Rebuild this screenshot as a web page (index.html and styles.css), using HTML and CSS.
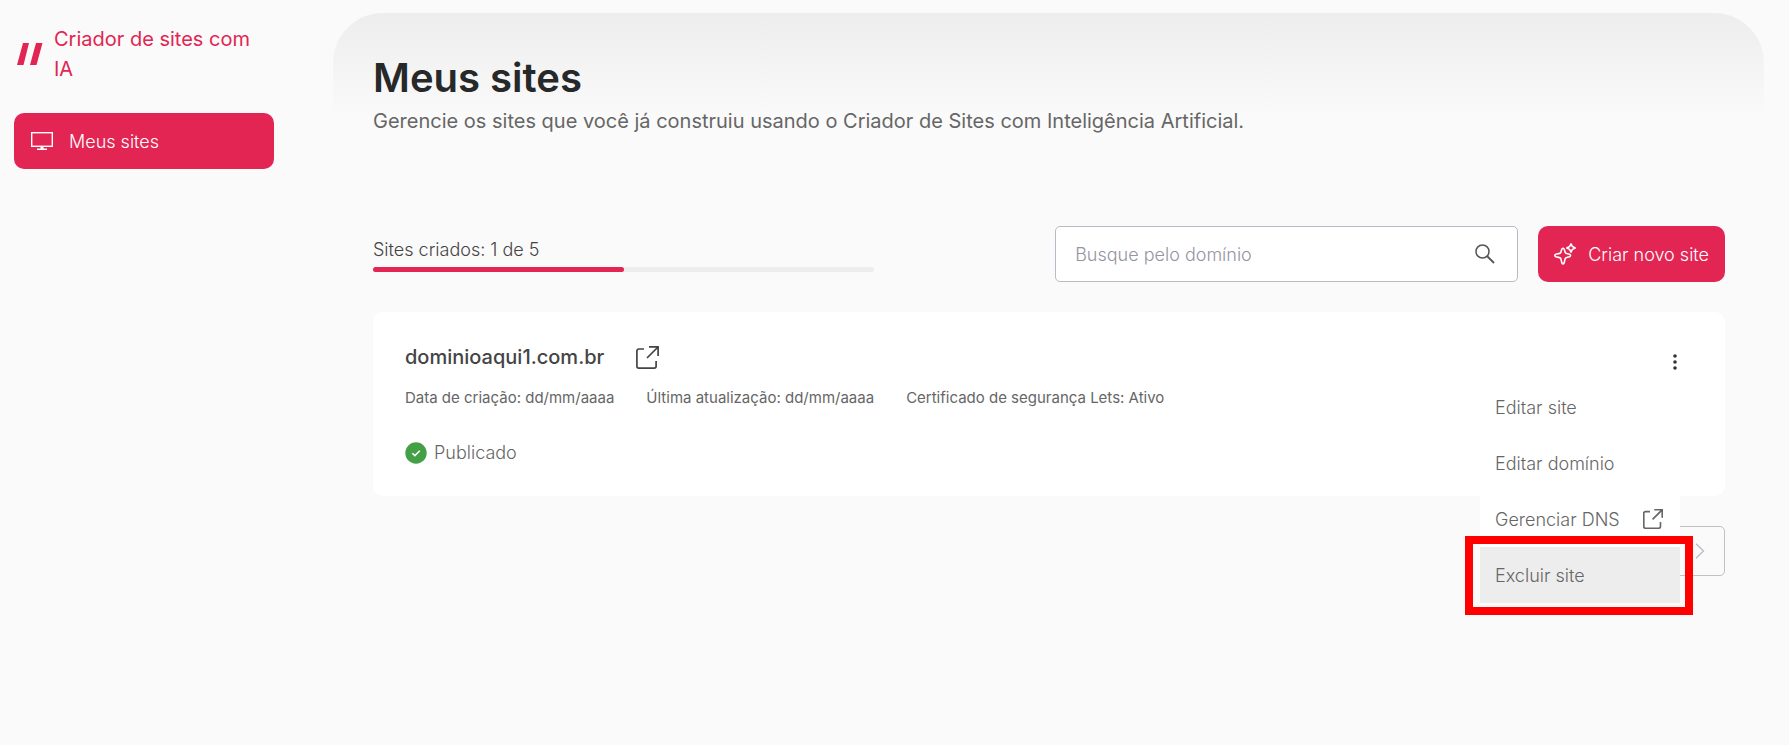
FILE: index.html
```html
<!DOCTYPE html>
<html lang="pt-BR">
<head>
    <meta charset="UTF-8">
    <meta name="viewport" content="width=device-width, initial-scale=1.0">
    <title>Meus sites</title>
    <link rel="stylesheet" href="styles.css">
</head>
<body>
    <aside class="sidebar">
        <a href="#" class="brand">
            <svg class="brand-logo" width="26" height="22" viewBox="0 0 26 22">
                <path d="M6 0h6L6.500 22H0zM19 0h6.500L19.500 22H13z" fill="currentColor"/>
            </svg>
            <span>Criador de sites com IA</span>
        </a>
        <nav>
            <a href="#" class="nav-link">
                <svg width="22" height="18" viewBox="0 0 22 18" fill="none" stroke="currentColor" stroke-width="1.400">
                    <rect x="0.700" y="0.700" width="20.600" height="13.600"/>
                    <path d="M11 14.500V17M6 17.200h10"/>
                    <path d="M9.500 14.500h3V17h-3z" fill="currentColor" stroke="none"/>
                </svg>
                Meus sites
            </a>
        </nav>
    </aside>

    <main class="content">
        <header class="header">
            <h1>Meus sites</h1>
            <p>Gerencie os sites que você já construiu usando o Criador de Sites com Inteligência Artificial.</p>
        </header>

        <div class="toolbar">
            <div class="quota">
                <span class="quota-label">Sites criados: 1 de 5</span>
                <div class="bar"><div class="bar-fill" style="width: 50%"></div></div>
            </div>
            <form class="search">
                <input type="text" aria-label="Busque pelo domínio" placeholder="Busque pelo domínio">
                <button type="submit" class="icon-button" aria-label="Buscar">
                    <svg width="20" height="20" viewBox="0 0 20 20" fill="none" stroke="currentColor" stroke-width="1.500">
                        <circle cx="7.500" cy="7.500" r="6.500"/>
                        <path d="M12 12l7 7" stroke-width="1.800"/>
                    </svg>
                </button>
            </form>
            <button type="button" class="button">
                <svg width="22" height="22" viewBox="0 0 22 22" fill="none" stroke="currentColor" stroke-width="1.600" stroke-linejoin="round">
                    <path d="M9 5.300c.8 0 1.100.5 1.300 1.100l.7 2.400c.2.900.7 1.400 1.500 1.600l3 .9c1.400.5 1.400 2 0 2.400l-3 .9c-.8.200-1.300.7-1.500 1.500l-.8 3.700c-.4 1.400-2 1.400-2.400 0L7 16.100c-.2-.8-.7-1.300-1.500-1.500l-3.600-.9c-1.400-.4-1.400-1.900 0-2.400l3.600-.9C6.300 10.200 6.800 9.700 7 8.800l.7-2.400c.2-.6.500-1.100 1.300-1.100z"/>
                    <path d="M17 .9l1.400 2.600L21.200 5l-2.800 1.400L17 9.100l-1.400-2.700L12.800 5l2.800-1.500z"/>
                </svg>
                Criar novo site
            </button>
        </div>

        <section class="card">
            <div class="card-info">
                <div class="domain">
                    <h2>dominioaqui1.com.br</h2>
                    <a href="#" aria-label="Abrir site">
                        <svg width="23" height="23" viewBox="0 0 23 23" fill="none" stroke="currentColor" stroke-width="1.700">
                            <path d="M8 3H2.800A1.900 1.900 0 0 0 .9 4.900v15.300a1.900 1.900 0 0 0 1.900 1.900h15.400a1.900 1.900 0 0 0 1.900-1.900V15"/>
                            <path d="M13 .9h9.100V10M22 1L11 12"/>
                        </svg>
                    </a>
                </div>
                <div class="meta">
                    <span>Data de criação: dd/mm/aaaa</span>
                    <span>Última atualização: dd/mm/aaaa</span>
                    <span>Certificado de segurança Lets: Ativo</span>
                </div>
                <div class="status">
                    <svg width="22" height="22" viewBox="0 0 22 22">
                        <circle cx="11" cy="11" r="10.700" fill="#43a047"/>
                        <path d="M7.300 11.200l2.600 2.400 4.900-4.800" fill="none" stroke="#fff" stroke-width="1.500"/>
                    </svg>
                    Publicado
                </div>
            </div>

            <div class="actions">
                <button type="button" class="icon-button" aria-label="Opções">
                    <svg width="20" height="20" viewBox="0 0 20 20" fill="currentColor">
                        <circle cx="10" cy="4" r="1.800"/>
                        <circle cx="10" cy="10" r="1.800"/>
                        <circle cx="10" cy="16" r="1.800"/>
                    </svg>
                </button>
                <!-- Menu de opções do site -->
                <div class="menu">
                    <a href="#">Editar site</a>
                    <a href="#">Editar domínio</a>
                    <a href="#">
                        Gerenciar DNS
                        <svg width="20" height="20" viewBox="0 0 23 23" fill="none" stroke="currentColor" stroke-width="1.900">
                            <path d="M8 3H2.800A1.900 1.900 0 0 0 .9 4.900v15.300a1.900 1.900 0 0 0 1.900 1.900h15.400a1.900 1.900 0 0 0 1.900-1.900V15"/>
                            <path d="M13 .9h9.100V10M22 1L11 12"/>
                        </svg>
                    </a>
                    <a href="#" class="selected">Excluir site</a>
                </div>
            </div>
        </section>

        <div class="pagination">
            <button type="button" class="page-button" aria-label="Próxima página">
                <svg width="10" height="16" viewBox="0 0 10 16" fill="none" stroke="currentColor" stroke-width="1.300">
                    <path d="M1 .7L8.500 8 1 15.300"/>
                </svg>
            </button>
        </div>
    </main>
</body>
</html>
```
FILE: styles.css
```css
* {
    box-sizing: border-box;
}

body {
    display: flex;
    margin: 0;
    font-family: Inter, sans-serif;
    font-size: 18px;
    font-weight: 300;
    color: #666;
    background-color: #fafafa;
}

h1, h2, p {
    margin: 0;
}

a {
    color: inherit;
    text-decoration: none;
}

button {
    font-family: inherit;
    font-size: inherit;
    font-weight: inherit;
    cursor: pointer;
}

svg {
    display: block;
    flex-shrink: 0;
}

.sidebar {
    flex: 0 0 288px;
    padding: 24px 14px;
}

.brand {
    display: flex;
    align-items: center;
    gap: 11px;
    padding-left: 3px;
    margin-bottom: 29px;
    color: #e22553;
    font-size: 20px;
    font-weight: 400;
    line-height: 30px;
}

.nav-link {
    display: flex;
    align-items: center;
    gap: 16px;
    height: 56px;
    padding: 0 17px;
    border-radius: 10px;
    background-color: #e22553;
    color: #fff;
}

.content {
    flex: 1;
    margin: 13px 25px 0 45px;
    padding: 40px 39px 40px 40px;
    border-radius: 50px 50px 0 0;
    background: linear-gradient(#ededed, #fafafa 104px) no-repeat;
}

.header h1 {
    color: #262829;
    font-size: 40px;
    font-weight: 600;
    line-height: 50px;
}

.header p {
    font-size: 20px;
    font-weight: 400;
    line-height: 36px;
}

.toolbar {
    display: flex;
    align-items: center;
    gap: 20px;
    margin: 87px 0 30px;
}

.quota {
    flex: 0 1 501px;
    margin-right: auto;
    color: #444;
}

.quota-label {
    display: block;
    line-height: 26px;
}

.bar {
    height: 5px;
    margin-top: 4px;
    border-radius: 3px;
    background-color: #ededed;
}

.bar-fill {
    height: 100%;
    border-radius: 3px;
    background-color: #e22553;
}

.search {
    display: flex;
    align-items: center;
    flex: 0 1 463px;
    height: 56px;
    padding: 0 22px 0 19px;
    border: 1px solid #b9bac4;
    border-radius: 5px;
    background-color: #fff;
}

.search input {
    flex: 1;
    min-width: 0;
    padding: 0;
    border: none;
    outline: none;
    background: none;
    font-family: inherit;
    font-size: 18px;
    font-weight: inherit;
}

.search input::placeholder {
    color: #94959f;
}

.icon-button {
    padding: 0;
    border: none;
    background: none;
    color: #555;
}

.button {
    display: flex;
    align-items: center;
    gap: 12px;
    height: 56px;
    padding: 0 16px;
    border: none;
    border-radius: 10px;
    background-color: #e22553;
    color: #fff;
    white-space: nowrap;
}

.card {
    display: flex;
    justify-content: space-between;
    padding: 30px 40px 28px 32px;
    border-radius: 10px;
    background-color: #fff;
}

.domain {
    display: flex;
    align-items: center;
    gap: 32px;
    color: #444;
}

.domain h2 {
    font-size: 20px;
    font-weight: 500;
    line-height: 30px;
}

.meta {
    display: flex;
    gap: 32px;
    margin: 14px 0 28px;
    font-size: 15px;
    font-weight: 400;
    line-height: 24px;
}

.status {
    display: flex;
    align-items: center;
    gap: 7px;
    line-height: 30px;
}

.actions {
    position: relative;
    height: 20px;
    margin-top: 10px;
}

.actions .icon-button {
    color: #333;
}

.menu {
    position: absolute;
    top: 27px;
    right: 5px;
    width: 200px;
    background-color: #fff;
}

.menu a {
    display: flex;
    align-items: center;
    justify-content: space-between;
    height: 56px;
    padding: 0 17px 0 15px;
}

.menu .selected {
    position: relative;
    background-color: #ededed;
}

/* Destaque do item */
.menu .selected::after {
    content: "";
    position: absolute;
    inset: -11px -13px -12px -15px;
    border: 8px solid #f00;
}

.pagination {
    display: flex;
    justify-content: flex-end;
    margin-top: 30px;
}

.page-button {
    display: flex;
    align-items: center;
    justify-content: flex-end;
    width: 50px;
    height: 50px;
    padding: 0 19px;
    border: 1px solid #c0c0c8;
    border-radius: 5px;
    background: none;
    color: #b9bac4;
}
```
